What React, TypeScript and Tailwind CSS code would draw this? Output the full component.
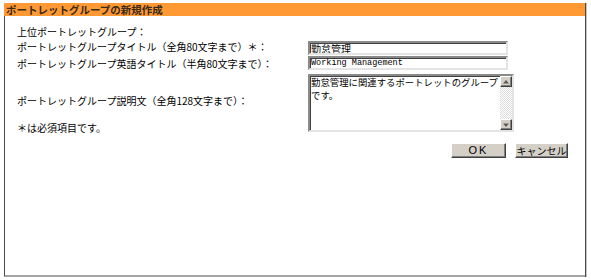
const inset =
  'border-2 border-t-[#8a8a8a] border-l-[#8a8a8a] border-r-[#e4e4e4] border-b-[#e4e4e4] shadow-[inset_1px_1px_0_#404040]';
const outset =
  'border border-t-white border-l-white border-r-[#404040] border-b-[#404040] bg-[#d4d0c8] shadow-[inset_-1px_-1px_0_#808080]';

function ScrollButton({ up }: { up?: boolean }) {
  return (
    <div className={`flex h-[11px] w-[12px] items-center justify-center ${outset}`}>
      <svg width="6" height="4" viewBox="0 0 6 4">
        {up ? <polygon points="3,0 6,3.5 0,3.5" fill="#5a5a5a" /> : <polygon points="0,0.5 6,0.5 3,4" fill="#5a5a5a" />}
      </svg>
    </div>
  );
}

function ClassicButton({ label, width, wide }: { label: string; width: string; wide?: boolean }) {
  return (
    <button
      type="button"
      className={`flex h-[15px] items-center justify-center ${width} ${outset} ${
        wide ? "font-['Liberation_Sans',sans-serif] text-[11px] tracking-[2px]" : 'text-[10px]'
      } leading-none text-black`}
    >
      {label}
    </button>
  );
}

export default function App() {
  return (
    <div className="h-[280px] w-[591px] bg-white pl-[4px] pt-[3px] font-['Noto_Sans_CJK_JP',sans-serif] text-black">
      <div className="w-[582px] border-r border-[#4a4a4a] shadow-[1px_0_0_#c4c4c4]">
        {/* Title bar */}
        <div className="h-[13px] bg-[#ff9933] pl-[2px] text-[10.5px] font-bold leading-[13px] text-[#3a2a1a]">
          ポートレットグループの新規作成
        </div>
        {/* Form */}
        <div className="h-[261px] border-b-2 border-l border-b-[#a3a3a3] border-l-[#4a4a4a]">
          <div className="flex">
            {/* Labels */}
            <div className="w-[303px] pl-[12px] pt-[9px] text-[10px] leading-[14px]">
              <p>上位ポートレットグループ：</p>
              <p className="mt-px">ポートレットグループタイトル（全角80文字まで）＊：</p>
              <p className="mt-[3px]">ポートレットグループ英語タイトル（半角80文字まで）：</p>
              <p className="mt-[23px]">ポートレットグループ説明文（全角128文字まで）：</p>
              <p className="mt-[13px]">＊は必須項目です。</p>
            </div>
            {/* Fields */}
            <div className="pt-[25px]">
              <input
                readOnly
                defaultValue="勤怠管理"
                className={`block h-[14px] w-[200px] ${inset} pl-px text-[10px] leading-[10px] outline-none`}
              />
              <input
                readOnly
                defaultValue="Working Management"
                className={`mt-px block h-[14px] w-[200px] ${inset} pl-px font-['Liberation_Mono',monospace] text-[8.5px] leading-[10px] outline-none`}
              />
              <div className={`mt-[4px] flex h-[58px] w-[206px] ${inset}`}>
                <textarea
                  readOnly
                  defaultValue="勤怠管理に関連するポートレットのグループです。"
                  className="h-full min-w-0 flex-1 resize-none overflow-hidden pl-px text-[9.4px] leading-[13px] outline-none"
                />
                <div className="flex w-[12px] flex-col">
                  <ScrollButton up />
                  <div className="flex-1 bg-[repeating-conic-gradient(#dcdcdc_0_25%,#ffffff_0_50%)] bg-[length:2px_2px]" />
                  <ScrollButton />
                </div>
              </div>
            </div>
          </div>
          {/* Actions */}
          <div className="mt-[8px] flex justify-end gap-[9px] pr-[17px]">
            <ClassicButton label="OK" width="w-[55px]" wide />
            <ClassicButton label="キャンセル" width="w-[53px]" />
          </div>
        </div>
      </div>
    </div>
  );
}
